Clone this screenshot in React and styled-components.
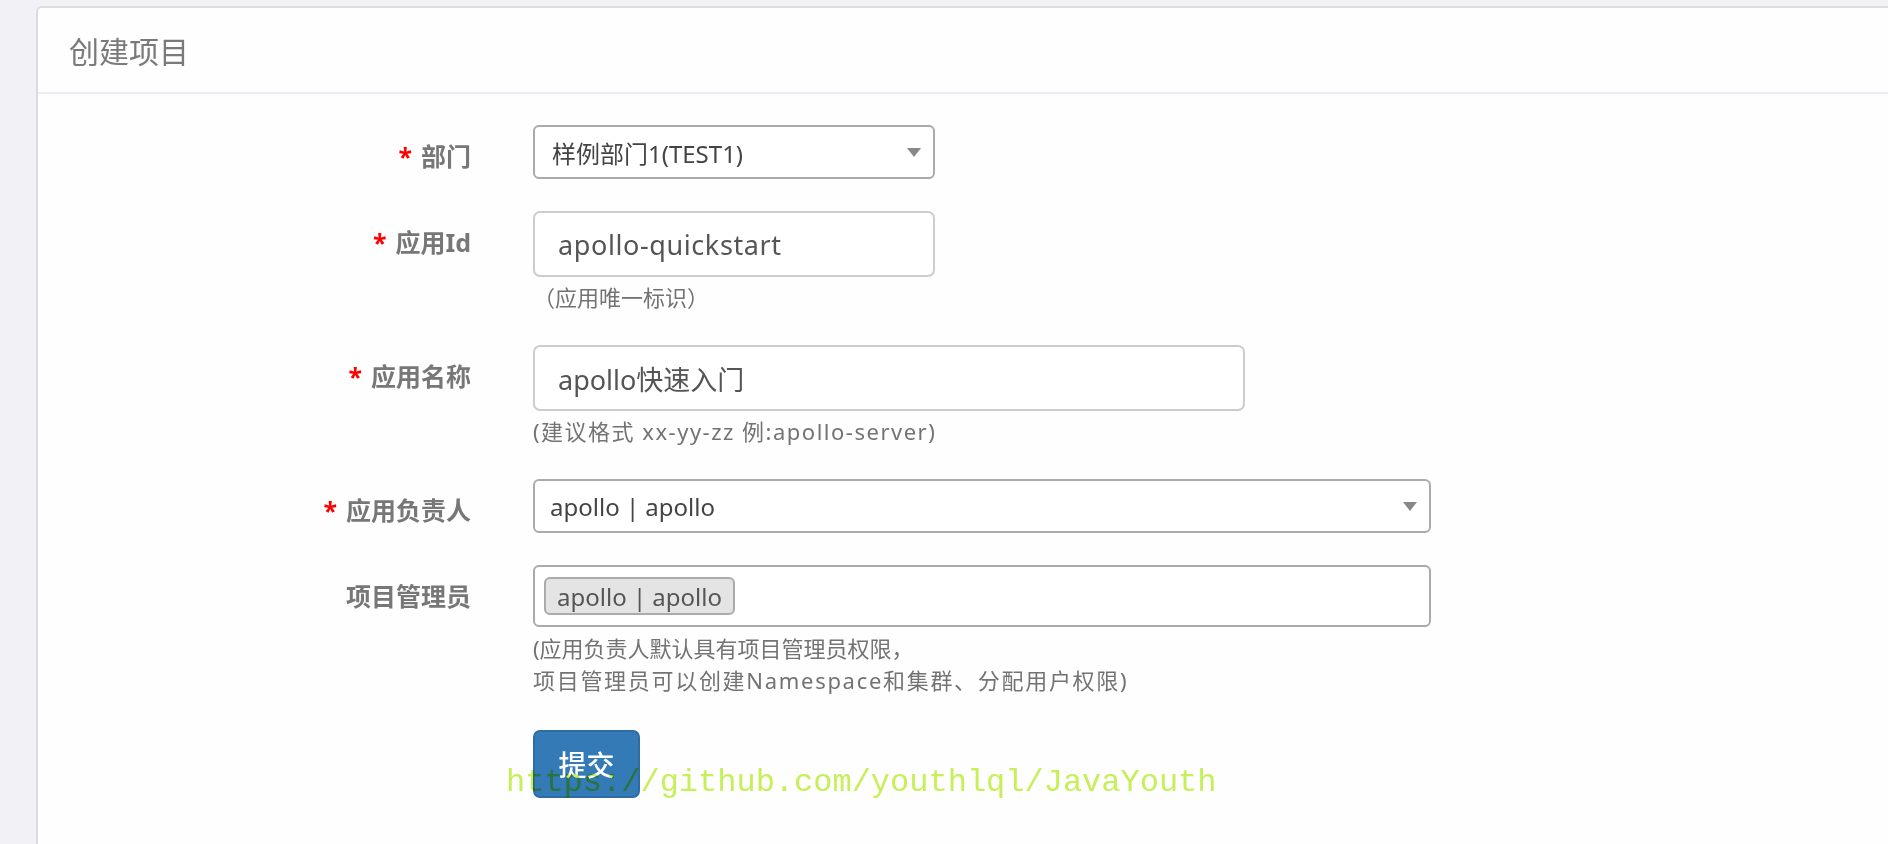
import React from "react";
import styled, { createGlobalStyle } from "styled-components";

const GlobalStyle = createGlobalStyle`
  html, body {
    margin: 0;
    padding: 0;
    background: #f1f1f6;
    overflow: hidden;
    font-family: "Noto Sans", "Noto Sans CJK SC", sans-serif;
  }
`;

const Page = styled.div`
  padding: 6px 0 0 36px;
  height: 844px;
  box-sizing: border-box;
`;

const Card = styled.div`
  background: #fefefe;
  border: 2px solid #dcdcdc;
  border-right: none;
  border-bottom: none;
  border-top-left-radius: 6px;
  margin-right: -20px;
  min-height: 900px;
`;

const Header = styled.div`
  height: 84px;
  display: flex;
  align-items: center;
  padding-left: 31px;
  font-size: 30px;
  font-weight: 400;
  color: #7a7a7a;
  border-bottom: 2px solid #eaeef3;
`;

const Body = styled.div`
  position: relative;
  padding-top: 31px;
`;

const Row = styled.div`
  display: grid;
  grid-template-columns: 433px auto;
  column-gap: 62px;
  margin-bottom: ${(p) => p.$mb ?? 32}px;
`;

const Label = styled.div`
  text-align: right;
  font-size: 25px;
  font-weight: 700;
  color: #777;
  line-height: 32px;
  padding-top: 15px;
  white-space: nowrap;
`;

const Star = styled.span`
  color: #ff0000;
  margin-right: 9px;
`;

const Control = styled.div`
  display: flex;
  flex-direction: column;
  align-items: flex-start;
`;

const Select = styled.div`
  width: ${(p) => p.$w}px;
  height: 54px;
  box-sizing: border-box;
  border: 2px solid #aaa;
  border-radius: 6px;
  display: flex;
  align-items: center;
  justify-content: space-between;
  padding: 0 12px 0 ${(p) => p.$pl ?? 17}px;
  font-size: 24px;
  color: #444;
  background: #fff;
`;

const Caret = styled.span`
  width: 0;
  height: 0;
  border-left: 7.5px solid transparent;
  border-right: 7.5px solid transparent;
  border-top: 9px solid #888;
  margin-top: 1px;
`;

const Input = styled.div`
  width: ${(p) => p.$w}px;
  height: 66px;
  box-sizing: border-box;
  border: 2px solid #ccc;
  border-radius: 7px;
  display: flex;
  align-items: center;
  padding-left: 23px;
  font-size: 27px;
  letter-spacing: ${(p) => p.$ls ?? 0}px;
  color: #555;
  background: #fff;
`;

const Help = styled.div`
  margin-top: ${(p) => p.$mt ?? 4}px;
  font-size: 22px;
  line-height: 32px;
  color: #737373;
  white-space: nowrap;
`;

const HelpLine = styled.span`
  display: block;
  letter-spacing: ${(p) => p.$ls ?? 0}px;
`;

const Multi = styled.div`
  width: 898px;
  height: 62px;
  box-sizing: border-box;
  border: 2px solid #aaa;
  border-radius: 6px;
  padding: 10px 9px;
  display: flex;
  align-items: flex-start;
  background: #fff;
`;

const Tag = styled.span`
  height: 38px;
  box-sizing: border-box;
  border: 2px solid #aaa;
  border-radius: 6px;
  background: #e4e4e4;
  padding: 0 11px 0 11px;
  display: inline-flex;
  align-items: center;
  font-size: 24px;
  color: #555;
`;

const Button = styled.button`
  width: 107px;
  height: 68px;
  margin-top: 34px;
  border: 2px solid #2e6da4;
  border-radius: 7px;
  background: #337ab7;
  color: #fff;
  font-family: "Noto Sans", "Noto Sans CJK SC", sans-serif;
  font-size: 28px;
  font-weight: 500;
  padding: 0;
  cursor: pointer;
`;

const Watermark = styled.div`
  position: absolute;
  left: 468px;
  top: 673px;
  font-family: "Liberation Mono", monospace;
  font-size: 32px;
  line-height: 32px;
  color: #c8f05a;
  mix-blend-mode: multiply;
  white-space: nowrap;
  pointer-events: none;
`;

export default function App() {
  return (
    <>
      <GlobalStyle />
      <Page>
        <Card>
          <Header>创建项目</Header>
          <Body>
            <Row>
              <Label>
                <Star>*</Star>部门
              </Label>
              <Control>
                <Select $w={402}>
                  <span>样例部门1(TEST1)</span>
                  <Caret />
                </Select>
              </Control>
            </Row>
            <Row>
              <Label>
                <Star>*</Star>应用Id
              </Label>
              <Control>
                <Input $w={402} $ls={0.6}>apollo-quickstart</Input>
                <Help>
                  <HelpLine>（应用唯一标识）</HelpLine>
                </Help>
              </Control>
            </Row>
            <Row>
              <Label>
                <Star>*</Star>应用名称
              </Label>
              <Control>
                <Input $w={712}>apollo快速入门</Input>
                <Help>
                  <HelpLine $ls={1.5}>(建议格式 xx-yy-zz 例:apollo-server)</HelpLine>
                </Help>
              </Control>
            </Row>
            <Row>
              <Label>
                <Star>*</Star>应用负责人
              </Label>
              <Control>
                <Select $w={898} $pl={15}>
                  <span>apollo | apollo</span>
                  <Caret />
                </Select>
              </Control>
            </Row>
            <Row $mb={0}>
              <Label>项目管理员</Label>
              <Control>
                <Multi>
                  <Tag>apollo | apollo</Tag>
                </Multi>
                <Help $mt={5}>
                  <HelpLine>(应用负责人默认具有项目管理员权限，</HelpLine>
                  <HelpLine $ls={1.7}>项目管理员可以创建Namespace和集群、分配用户权限)</HelpLine>
                </Help>
                <Button>提交</Button>
              </Control>
            </Row>
            <Watermark>https://github.com/youthlql/JavaYouth</Watermark>
          </Body>
        </Card>
      </Page>
    </>
  );
}
